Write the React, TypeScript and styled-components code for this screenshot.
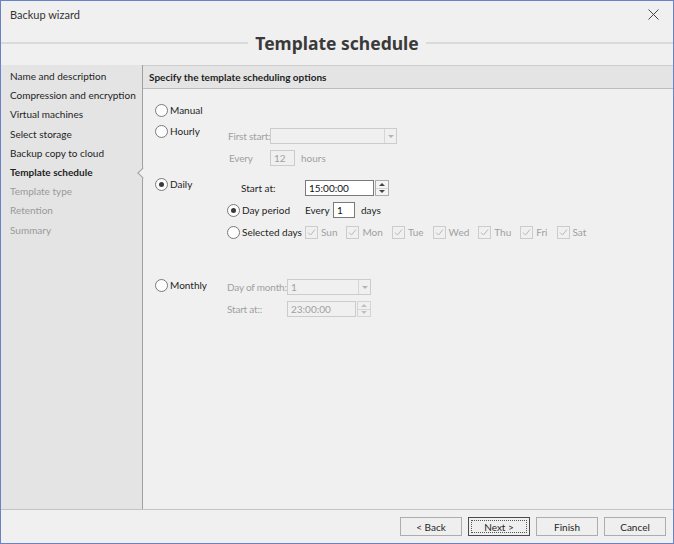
import React from "react";
import styled, { createGlobalStyle } from "styled-components";

const GlobalStyle = createGlobalStyle`
  html, body {
    margin: 0;
    padding: 0;
    background: #f0f0f0;
  }
  body {
    font-family: Lato, "Noto Sans", sans-serif;
    font-size: 10px;
    color: #1e1e1e;
  }
  * {
    box-sizing: border-box;
  }
`;

const Window = styled.div`
  width: 674px;
  height: 544px;
  border: 1px solid #6b82c9;
  background: #f0f0f0;
  display: flex;
  flex-direction: column;
`;

const TitleBar = styled.div`
  height: 28px;
  flex: none;
  display: flex;
  align-items: center;
  justify-content: space-between;
  padding: 0 14px 2px 9px;
  font-size: 11px;
  color: #333;
`;

const CloseIcon = styled.svg`
  width: 11px;
  height: 11px;
  display: block;
`;

const Heading = styled.div`
  height: 36px;
  flex: none;
  padding-top: 2px;
  display: flex;
  align-items: flex-start;
`;

const HeadingLine = styled.span`
  flex: 1;
  height: 2px;
  margin-top: 11px;
  background: #dadada;
`;

const HeadingText = styled.h1`
  margin: 0 7px;
  font-family: "Noto Sans", sans-serif;
  font-size: 17.5px;
  line-height: 24px;
  font-weight: bold;
  color: #3a3a3a;
`;

const Body = styled.div`
  flex: 1;
  min-height: 0;
  display: flex;
`;

const Sidebar = styled.nav`
  width: 141px;
  flex: none;
  background: #e4e4e4;
  padding-top: 2px;
`;

type StepState = "done" | "active" | "todo";

const NavItem = styled.div<{ $state: StepState }>`
  position: relative;
  height: 19.2px;
  line-height: 19px;
  padding-left: 9px;
  white-space: nowrap;
  color: ${(p) => (p.$state === "todo" ? "#9a9a9a" : "#1e1e1e")};
  font-weight: ${(p) => (p.$state === "active" ? "bold" : "normal")};

  ${(p) =>
    p.$state === "active" &&
    `
    &::after {
      content: "";
      position: absolute;
      right: -4.5px;
      top: 50%;
      width: 7px;
      height: 7px;
      margin-top: -3.5px;
      background: #f0f0f0;
      border-left: 1px solid #a0a0a0;
      border-bottom: 1px solid #a0a0a0;
      transform: rotate(45deg);
      z-index: 2;
    }
  `}
`;

const Panel = styled.main`
  flex: 1;
  display: flex;
  flex-direction: column;
  border-left: 1px solid #a0a0a0;
`;

const PanelHeader = styled.div`
  height: 24px;
  flex: none;
  display: flex;
  align-items: center;
  padding-left: 6px;
  background: #e4e4e4;
  border-top: 1px solid #cdcdcd;
  border-bottom: 1px solid #bdbdbd;
  font-weight: bold;
  color: #1e1e1e;
`;

const Content = styled.div`
  flex: 1;
  padding: 13px 0 0 12px;
`;

const Block = styled.div<{ $top: number }>`
  display: flex;
  align-items: flex-start;
  margin-top: ${(p) => p.$top}px;
`;

const RadioCol = styled.div`
  width: 72px;
  flex: none;
`;

const Stack = styled.div<{ $top: number; $gap: number }>`
  display: flex;
  flex-direction: column;
  gap: ${(p) => p.$gap}px;
  margin-top: ${(p) => p.$top}px;
`;

const Row = styled.div<{ $indent?: number }>`
  display: flex;
  align-items: center;
  height: 16px;
  padding-left: ${(p) => p.$indent ?? 0}px;
`;

const RadioLabel = styled.label<{ $w?: number }>`
  display: flex;
  align-items: center;
  gap: 2px;
  height: 16px;
  white-space: nowrap;
  width: ${(p) => (p.$w ? `${p.$w}px` : "auto")};
  flex: none;
`;

const RadioCircle = styled.span<{ $checked?: boolean }>`
  width: 13px;
  height: 13px;
  flex: none;
  border-radius: 50%;
  border: 1px solid #7a7a7a;
  background: #fdfdfd;
  display: flex;
  align-items: center;
  justify-content: center;

  &::after {
    content: "";
    width: 5px;
    height: 5px;
    border-radius: 50%;
    background: ${(p) => (p.$checked ? "#3a3a3a" : "transparent")};
  }
`;

const FieldLabel = styled.span<{ $w: number; $disabled?: boolean }>`
  width: ${(p) => p.$w}px;
  flex: none;
  white-space: nowrap;
  letter-spacing: ${(p) => (p.$disabled ? "-0.2px" : "0")};
  color: ${(p) => (p.$disabled ? "#a0a0a0" : "#1e1e1e")};
`;

const Suffix = styled.span<{ $disabled?: boolean }>`
  margin-left: 6px;
  color: ${(p) => (p.$disabled ? "#a0a0a0" : "#1e1e1e")};
`;

const Field = styled.div<{ $w: number; $disabled?: boolean }>`
  width: ${(p) => p.$w}px;
  height: 16px;
  flex: none;
  display: flex;
  align-items: center;
  padding-left: 3px;
  border: 1px solid ${(p) => (p.$disabled ? "#cccccc" : "#7a7a7a")};
  background: ${(p) => (p.$disabled ? "#f0f0f0" : "#ffffff")};
  color: ${(p) => (p.$disabled ? "#a0a0a0" : "#111")};
`;

const ComboBox = styled.div<{ $w: number }>`
  width: ${(p) => p.$w}px;
  height: 16px;
  flex: none;
  display: flex;
  border: 1px solid #cccccc;
  background: #f0f0f0;
  color: #a0a0a0;
`;

const ComboValue = styled.span`
  flex: 1;
  padding-left: 3px;
  line-height: 14px;
`;

const ComboArrow = styled.span`
  width: 12px;
  flex: none;
  border-left: 1px solid #d6d6d6;
  display: flex;
  align-items: center;
  justify-content: center;

  &::after {
    content: "";
    border-left: 3px solid transparent;
    border-right: 3px solid transparent;
    border-top: 3px solid #b4b4b4;
  }
`;

const SpinWrap = styled.div`
  display: flex;
  flex: none;
`;

const SpinButtons = styled.div<{ $disabled?: boolean }>`
  width: 14px;
  height: 16px;
  margin-left: 1px;
  display: flex;
  flex-direction: column;
  border: 1px solid ${(p) => (p.$disabled ? "#d4d4d4" : "#acacac")};
  background: ${(p) => (p.$disabled ? "#f0f0f0" : "#f4f4f4")};
`;

const SpinHalf = styled.span<{ $dir: "up" | "down"; $disabled?: boolean }>`
  flex: 1;
  display: flex;
  align-items: center;
  justify-content: center;
  & + & {
    border-top: 1px solid ${(p) => (p.$disabled ? "#d4d4d4" : "#acacac")};
  }

  &::after {
    content: "";
    border-left: 3px solid transparent;
    border-right: 3px solid transparent;
    ${(p) =>
      p.$dir === "up"
        ? `border-bottom: 3px solid ${p.$disabled ? "#c0c0c0" : "#444"};`
        : `border-top: 3px solid ${p.$disabled ? "#c0c0c0" : "#444"};`}
  }
`;

const DayList = styled.div`
  display: flex;
  align-items: center;
  gap: 9px;
`;

const DayCheck = styled.label`
  display: flex;
  align-items: center;
  gap: 3px;
  color: #a0a0a0;
  white-space: nowrap;
`;

const CheckBox = styled.span`
  width: 13px;
  height: 13px;
  flex: none;
  border: 1px solid #cccccc;
  background: #f0f0f0;
  display: flex;
  align-items: center;
  justify-content: center;
`;

const Footer = styled.footer`
  height: 34px;
  flex: none;
  display: flex;
  align-items: center;
  justify-content: flex-end;
  gap: 6px;
  padding-right: 7px;
  border-top: 1px solid #c4c4c4;
`;

const Button = styled.button<{ $focused?: boolean }>`
  position: relative;
  width: 62px;
  height: 19px;
  padding: 0;
  font-family: inherit;
  font-size: 10px;
  color: #1e1e1e;
  background: #efefef;
  border: 1px solid ${(p) => (p.$focused ? "#4a4a4a" : "#adadad")};

  ${(p) =>
    p.$focused &&
    `
    &::after {
      content: "";
      position: absolute;
      inset: 2px;
      border: 1px dotted #555;
    }
  `}
`;

const steps: { label: string; state: StepState }[] = [
  { label: "Name and description", state: "done" },
  { label: "Compression and encryption", state: "done" },
  { label: "Virtual machines", state: "done" },
  { label: "Select storage", state: "done" },
  { label: "Backup copy to cloud", state: "done" },
  { label: "Template schedule", state: "active" },
  { label: "Template type", state: "todo" },
  { label: "Retention", state: "todo" },
  { label: "Summary", state: "todo" },
];

const days = ["Sun", "Mon", "Tue", "Wed", "Thu", "Fri", "Sat"];

const Radio = ({ label, checked, w }: { label: string; checked?: boolean; w?: number }) => (
  <RadioLabel $w={w}>
    <RadioCircle $checked={checked} />
    {label}
  </RadioLabel>
);

const Spin = ({ value, w, disabled }: { value: string; w: number; disabled?: boolean }) => (
  <SpinWrap>
    <Field $w={w} $disabled={disabled}>
      {value}
    </Field>
    <SpinButtons $disabled={disabled}>
      <SpinHalf $dir="up" $disabled={disabled} />
      <SpinHalf $dir="down" $disabled={disabled} />
    </SpinButtons>
  </SpinWrap>
);

const Combo = ({ value, w }: { value: string; w: number }) => (
  <ComboBox $w={w}>
    <ComboValue>{value}</ComboValue>
    <ComboArrow />
  </ComboBox>
);

const App = (): JSX.Element => {
  return (
    <>
      <GlobalStyle />
      <Window>
        <TitleBar>
          <span>Backup wizard</span>
          <CloseIcon viewBox="0 0 11 11">
            <path d="M0.5 0.5 L10.5 10.5 M10.5 0.5 L0.5 10.5" stroke="#444" strokeWidth="1" />
          </CloseIcon>
        </TitleBar>
        <Heading>
          <HeadingLine />
          <HeadingText>Template schedule</HeadingText>
          <HeadingLine />
        </Heading>
        <Body>
          <Sidebar>
            {steps.map((s) => (
              <NavItem key={s.label} $state={s.state}>
                {s.label}
              </NavItem>
            ))}
          </Sidebar>
          <Panel>
            <PanelHeader>Specify the template scheduling options</PanelHeader>
            <Content>
              <Block $top={0}>
                <RadioCol>
                  <Radio label="Manual" />
                </RadioCol>
              </Block>

              <Block $top={5}>
                <RadioCol>
                  <Radio label="Hourly" />
                </RadioCol>
                <Stack $top={5} $gap={6}>
                  <Row $indent={1}>
                    <FieldLabel $w={42} $disabled>
                      First start:
                    </FieldLabel>
                    <Combo value="" w={127} />
                  </Row>
                  <Row $indent={2}>
                    <FieldLabel $w={41} $disabled>
                      Every
                    </FieldLabel>
                    <Field $w={25} $disabled>
                      12
                    </Field>
                    <Suffix $disabled>hours</Suffix>
                  </Row>
                </Stack>
              </Block>

              <Block $top={10}>
                <RadioCol>
                  <Radio label="Daily" checked />
                </RadioCol>
                <Stack $top={4} $gap={6}>
                  <Row $indent={14}>
                    <FieldLabel $w={64}>Start at:</FieldLabel>
                    <Spin value="15:00:00" w={69} />
                  </Row>
                  <Row>
                    <Radio label="Day period" checked w={78} />
                    <FieldLabel $w={28}>Every</FieldLabel>
                    <Field $w={22}>1</Field>
                    <Suffix>days</Suffix>
                  </Row>
                  <Row>
                    <Radio label="Selected days" w={78} />
                    <DayList>
                      {days.map((d) => (
                        <DayCheck key={d}>
                          <CheckBox>
                            <svg width="9" height="9" viewBox="0 0 9 9">
                              <path d="M1 4.5 L3.5 7 L8 1.5" stroke="#b8b8b8" strokeWidth="1" fill="none" />
                            </svg>
                          </CheckBox>
                          {d}
                        </DayCheck>
                      ))}
                    </DayList>
                  </Row>
                </Stack>
              </Block>

              <Block $top={37}>
                <RadioCol>
                  <Radio label="Monthly" />
                </RadioCol>
                <Stack $top={2} $gap={6}>
                  <Row $indent={-1}>
                    <FieldLabel $w={60} $disabled>
                      Day of month:
                    </FieldLabel>
                    <Combo value="1" w={84} />
                  </Row>
                  <Row $indent={-1}>
                    <FieldLabel $w={60} $disabled>
                      Start at::
                    </FieldLabel>
                    <Spin value="23:00:00" w={69} disabled />
                  </Row>
                </Stack>
              </Block>
            </Content>
          </Panel>
        </Body>
        <Footer>
          <Button>&lt; Back</Button>
          <Button $focused>Next &gt;</Button>
          <Button>Finish</Button>
          <Button>Cancel</Button>
        </Footer>
      </Window>
    </>
  );
};

export default App;
